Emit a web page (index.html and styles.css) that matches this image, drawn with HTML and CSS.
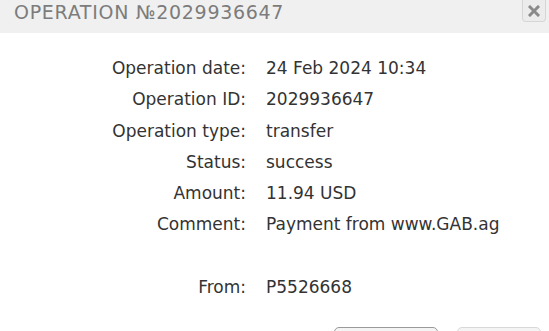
FILE: index.html
```html
<!DOCTYPE html>
<html>
<head>
<meta charset="utf-8">
<link rel="stylesheet" href="styles.css">
</head>
<body>
<div class="dialog">
  <div class="header">
    <div class="title">OPERATION №2029936647</div>
    <button class="close" aria-label="Close">
      <svg width="12" height="12" viewBox="0 0 12 12"><path d="M2 2 L10 10 M10 2 L2 10" stroke="#8a8a8a" stroke-width="3" stroke-linecap="square"/></svg>
    </button>
  </div>
  <div class="details">
    <div class="label">Operation date:</div><div class="value">24 Feb 2024 10:34</div>
    <div class="label">Operation ID:</div><div class="value">2029936647</div>
    <div class="label">Operation type:</div><div class="value">transfer</div>
    <div class="label">Status:</div><div class="value">success</div>
    <div class="label">Amount:</div><div class="value">11.94 USD</div>
    <div class="label">Comment:</div><div class="value">Payment from www.GAB.ag</div>
    <div class="label"></div><div class="value"></div>
    <div class="label">From:</div><div class="value">P5526668</div>
  </div>
  <div class="footer">
    <button class="btn btn-primary" aria-label="Print"></button>
    <button class="btn btn-secondary" aria-label="Close"></button>
  </div>
</div>
</body>
</html>
```
FILE: styles.css
```css
html, body {
  margin: 0;
  padding: 0;
  background: #fff;
  overflow: hidden;
}
.dialog {
  width: 549px;
  height: 331px;
  display: flex;
  flex-direction: column;
  font-family: "DejaVu Sans", sans-serif;
  color: #333;
  overflow: hidden;
}
.header {
  height: 33px;
  flex: none;
  background: #f0f0f0;
  display: flex;
  align-items: flex-start;
  justify-content: space-between;
  padding: 0 3px 0 14px;
  box-sizing: border-box;
}
.title {
  font-family: "DejaVu Sans", sans-serif;
  font-size: 19px;
  letter-spacing: 0.7px;
  color: #7c7c7c;
  line-height: 22px;
  margin-top: 1px;
}
.close {
  width: 24px;
  height: 22px;
  border: 1px solid #d6d6d6;
  border-top: none;
  border-radius: 0 0 4px 4px;
  background: #ececec;
  display: flex;
  align-items: center;
  justify-content: center;
  padding: 0;
}
.details {
  display: grid;
  grid-template-columns: 246px 1fr;
  column-gap: 20px;
  grid-auto-rows: 31.3px;
  padding-top: 20px;
  font-size: 17px;
  line-height: 31px;
}
.label { text-align: right; white-space: nowrap; }
.value { white-space: nowrap; }
.footer {
  display: flex;
  gap: 19px;
  padding-left: 334px;
  margin-top: auto;
  height: 4px;
  flex: none;
}
.btn {
  height: 30px;
  border-radius: 5px;
  background: #f4f4f4;
  flex: none;
  padding: 0;
}
.btn-primary { width: 104px; border: 1px solid #9a9a9a; }
.btn-secondary { width: 84px; border: 1px solid #d8d8d8; }
```
